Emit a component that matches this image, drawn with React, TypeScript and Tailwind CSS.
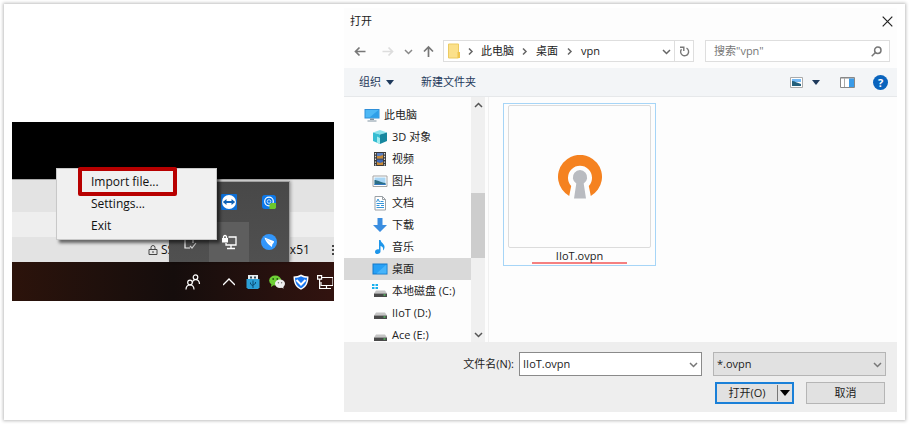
import type { ReactNode } from "react";

const FONT = "font-['Open_Sans','Noto_Sans_CJK_SC',sans-serif]";

function Chevron({ dir, className = "" }: { dir: "right" | "down" | "up"; className?: string }) {
  const d = dir === "right" ? "M3 1.5 6 4.5 3 7.5" : dir === "down" ? "M1 3 4.5 6.5 8 3" : "M1 6 4.5 2.5 8 6";
  return (
    <svg className={`size-[9px] shrink-0 ${className}`} viewBox="0 0 9 9" fill="none" stroke="currentColor" strokeWidth="1.5">
      <path d={d} />
    </svg>
  );
}

/* ---------- desktop with the tray menu ---------- */

function TeamViewerIcon() {
  return (
    <svg className="size-4" viewBox="0 0 16 16">
      <rect width="16" height="16" rx="1" fill="#0d6fd6" />
      <circle cx="8" cy="8" r="7" fill="#fff" />
      <path d="M1.800 8 5.500 5v2h5V5l3.700 3-3.700 3V9h-5v2Z" fill="#0d62b8" />
    </svg>
  );
}

function SearchToolIcon() {
  return (
    <svg className="size-4" viewBox="0 0 16 16">
      <rect x="1" y="1" width="14" height="14" rx="3" fill="#0d78e8" />
      <circle cx="8" cy="7.500" r="4.300" fill="none" stroke="#fff" strokeWidth="1.200" />
      <circle cx="8" cy="7.500" r="1.800" fill="none" stroke="#bfe0ff" strokeWidth="1" />
      <path d="M8.500 10.500 10 9h5v4.500l-1 1.500H8.500Z" fill="#6cc82c" />
    </svg>
  );
}

function DeviceCheckIcon() {
  return (
    <svg className="size-4" viewBox="0 0 16 16" fill="none" stroke="#f2f2f2" strokeWidth="1.200">
      <path d="M9 14H4V1h8v8" />
      <path d="m9 12 2 2 4-5" stroke="#c9c9c9" />
    </svg>
  );
}

function LockedMonitorIcon() {
  return (
    <svg className="size-4" viewBox="0 0 16 16" fill="none" stroke="#fff" strokeWidth="1.300">
      <path d="M7.500 3H15v8H5V9M10 11v3M6 14.500h8" />
      <path d="M2.500 4.500V3a1.500 1.500 0 0 1 3 0v1.500" />
      <rect x="1" y="4" width="6" height="4.500" fill="#fff" stroke="none" />
    </svg>
  );
}

function BirdIcon() {
  return (
    <svg className="size-4" viewBox="0 0 16 16">
      <circle cx="8" cy="8" r="8" fill="#3296fa" />
      <path d="M3.500 3.500 13 7.200c.2 1-.6 2-1.500 2.800l-.7 3-2.500-2C6.500 9.500 4.500 7 3.500 3.500Z" fill="#fff" />
      <path d="m5 5 5 4" stroke="#b9dcff" strokeWidth=".8" />
    </svg>
  );
}

function PeopleIcon() {
  return (
    <svg className="size-4" viewBox="0 0 16 16" fill="none" stroke="#fff" strokeWidth="1.200">
      <circle cx="10.500" cy="3.200" r="2.300" />
      <path d="M7.500 8.500c0-4 6.800-4 7 1.500" />
      <circle cx="5" cy="8.500" r="2.300" />
      <path d="M1 15.500c.2-6 7.800-6 8 0" />
    </svg>
  );
}

function UsbIcon() {
  return (
    <svg className="size-4" viewBox="0 0 16 16">
      <rect x="3" y="1" width="10" height="5" fill="#e7eef2" />
      <path d="M5 2.500h2v2H5zM9 2.500h2v2H9z" fill="#374c58" />
      <path d="M1.500 5h13v8.500L13 15H3l-1.500-1.500Z" fill="#2c9fd6" />
      <path d="M8 14V6.500M8 12 5.500 10V8.500M8 11l2.500-1.500V8" stroke="#0b4c74" fill="none" />
    </svg>
  );
}

function WeChatIcon() {
  return (
    <svg className="size-4" viewBox="0 0 16 16">
      <ellipse cx="6.200" cy="6.500" rx="6" ry="5" fill="#6ecf35" />
      <path d="m2.500 10-.5 3 3-2Z" fill="#6ecf35" />
      <circle cx="4.200" cy="5" r=".9" fill="#245b10" />
      <circle cx="8.300" cy="5" r=".9" fill="#245b10" />
      <ellipse cx="11" cy="9.700" rx="5" ry="4.200" fill="#ededed" />
      <path d="m12 13 2.500 1.700-.3-2.700Z" fill="#ededed" />
      <circle cx="9.400" cy="8.700" r=".7" fill="#777" />
      <circle cx="12.600" cy="8.700" r=".7" fill="#777" />
    </svg>
  );
}

function ShieldIcon() {
  return (
    <svg className="size-4" viewBox="0 0 16 16">
      <path d="M.5 2.500C3 2.500 6 1.800 8 .5c2 1.300 5 2 7.500 2 0 7-2.500 11-7.500 13.300C3 13.500.5 9.500.5 2.500Z" fill="#fff" />
      <path d="M2 3.800c2-.1 4.200-.6 6-1.600 1.800 1 4 1.500 6 1.600-.2 5.500-2.200 8.700-6 10.500C4.200 12.500 2.200 9.300 2 3.800Z" fill="#1877f2" />
      <path d="m3.500 6 4.500 4.500L12.500 6" fill="none" stroke="#fff" strokeWidth="2" />
    </svg>
  );
}

function NetworkIcon() {
  return (
    <svg className="size-4" viewBox="0 0 16 16" fill="none" stroke="#fff" strokeWidth="1.200">
      <path d="M5 3.500h11v8H4V8M9.500 11.500v3M6 14.500h8" />
      <path d="M.6 1.600h4v3.500h-4zM2.600 5v9.500H6" />
    </svg>
  );
}

function TrayCell({ children, active = false }: { children?: ReactNode; active?: boolean }) {
  return <span className={`flex size-10 items-center justify-center ${active ? "bg-[#5e5e5e]" : ""}`}>{children}</span>;
}

function DesktopPanel() {
  return (
    <section className="relative mt-[114px] w-[322px] shrink-0 self-start overflow-hidden text-[12px] text-[#111]">
      <div className="h-[57px] bg-black" />
      <div className="h-[33px] border-t border-[#aaa] bg-[#e3e3e3]" />
      <div className="h-[25px] bg-[#eeeeee]" />
      <div className="flex h-[25px] items-center bg-[#e3e3e3] pl-[136px]">
        <svg className="size-[10px]" viewBox="0 0 10 10" fill="none" stroke="#444">
          <path d="M1 4.500h8v5H1zM3 4V2.500a2 2 0 0 1 4 0V4M5 6v2" />
        </svg>
        <span className="w-[125px] pl-[3px]">SSL</span>
        <span>0x51</span>
        <span className="ml-auto h-[10px] border-l-2 border-dotted border-[#444]" />
      </div>
      <div className="flex h-[39px] items-center justify-end bg-linear-to-r from-[#2c130b] via-[#150d0c] to-[#32130f]">
        <span className="mr-[22px]">
          <PeopleIcon />
        </span>
        <svg className="mr-[10px] h-4 w-3" viewBox="0 0 12 16" fill="none" stroke="#fff" strokeWidth="1.400">
          <path d="m0 11 6-6 6 6" />
        </svg>
        <div className="mr-px flex gap-2">
          <UsbIcon />
          <WeChatIcon />
          <ShieldIcon />
          <NetworkIcon />
        </div>
      </div>

      <div className="absolute top-[59px] left-[157px] grid grid-cols-3 border-t border-r border-[#a0a0a0] bg-linear-to-b from-[#484848] to-[#505050] shadow-[1px_0_3px_rgba(0,0,0,0.3)]">
        <TrayCell />
        <TrayCell>
          <TeamViewerIcon />
        </TrayCell>
        <TrayCell>
          <SearchToolIcon />
        </TrayCell>
        <TrayCell>
          <DeviceCheckIcon />
        </TrayCell>
        <TrayCell active>
          <LockedMonitorIcon />
        </TrayCell>
        <TrayCell>
          <BirdIcon />
        </TrayCell>
      </div>

      <div className="absolute top-[46px] left-[44px] flex w-[161px] flex-col border border-[#c8c8c8] bg-[#f0f0f0] py-[2px] shadow-[3px_3px_3px_rgba(0,0,0,0.55)]">
        <button className="h-[22px] pl-[34px] text-left">Import file...</button>
        <button className="h-[22px] pl-[34px] text-left">Settings...</button>
        <button className="h-[22px] pl-[34px] text-left">Exit</button>
      </div>
      <div className="pointer-events-none absolute top-[45px] left-[66px] h-[29px] w-[99px] rounded-[2px] border-4 border-[#b80000]" />
    </section>
  );
}

/* ---------- icons of the folder tree ---------- */

function PcIcon() {
  return (
    <svg className="h-4 w-4" viewBox="0 0 16 16">
      <path d="M.5 2h15v9.500H.5z" fill="#2f8fd8" />
      <path d="M1.500 3h13v7.500h-13z" fill="#4db8f5" />
      <path d="M14.500 3v7.500h-9Z" fill="#2f9fe8" />
      <path d="M6 11.500h4V13H6zM3.500 13.500h9v1h-9z" fill="#8195a3" />
    </svg>
  );
}
function CubeIcon() {
  return (
    <svg className="h-4 w-4" viewBox="0 0 16 16">
      <path d="m1 3.500 7-2.500 7 2.500-7 2Z" fill="#8be3ec" />
      <path d="M1 3.500 8 5.500V15l-7-3Z" fill="#35bdd2" />
      <path d="m15 3.500-7 2V15l7-3Z" fill="#16879f" />
      <path d="M5 7.500 8 9v6l-3-1.500Z" fill="#a2edf0" />
    </svg>
  );
}
function FilmIcon() {
  return (
    <svg className="h-4 w-4" viewBox="0 0 16 16">
      <path d="M2 1h12v14H2z" fill="#3a3a3a" />
      <path d="M5 2h6v5.500H5z" fill="#5a7fc0" />
      <path d="M5 8.500h6V14H5z" fill="#3f69b8" />
      <path d="M5 5h3l3-1v3.500H5zM5 11l3 1 3-1v3H5z" fill="#c98a35" />
      <path d="M3.500 2v13M12.500 2v13" stroke="#ddd" strokeWidth="1.200" strokeDasharray="1.400 1.400" />
    </svg>
  );
}
function PictureIcon() {
  return (
    <svg className="h-4 w-4" viewBox="0 0 16 16">
      <path d="M1 3h14v10.500H1z" fill="#fff" stroke="#a5a5a5" />
      <path d="M2.500 4.500h11V12h-11z" fill="#a9d6f5" />
      <path d="M2.500 7C6 7 8 9.500 13.500 10v2h-11Z" fill="#2d6f86" />
      <path d="M2.500 11h11v1h-11z" fill="#3279c1" />
    </svg>
  );
}
function DocIcon() {
  return (
    <svg className="h-4 w-4" viewBox="0 0 16 16">
      <path d="M3 1.500h7.500l3 3v10.500H3z" fill="#fff" stroke="#9aa0a5" />
      <path d="M10.500 1.500v3h3" fill="none" stroke="#9aa0a5" />
      <path d="m4.500 7 1.500-3 1.500 3M8.500 6.500h3M4.500 8.500h7.500M4.500 10.500h3M9 10.500h3M4.500 12.500h7.500" stroke="#3594d8" fill="none" />
    </svg>
  );
}
function DownloadIcon() {
  return (
    <svg className="h-4 w-4" viewBox="0 0 16 16">
      <path d="M5.500 1h5v7H15l-7 7-7-7h4.500Z" fill="#3a8de0" />
    </svg>
  );
}
function MusicIcon() {
  return (
    <svg className="h-4 w-4" viewBox="0 0 16 16">
      <path d="M7 1h1.500c.5 3 4.500 4 4 7.500-.2 1.500-1 2.500-1.500 3 .5-3-.5-4-2.500-4.500v5.500c0 3-5.500 3.500-5.500.5 0-2 2-3 4-2.500Z" fill="#1e96ea" />
    </svg>
  );
}
function DesktopIcon() {
  return (
    <svg className="h-4 w-4" viewBox="0 0 16 16">
      <path d="M.5 2.500h15v11H.5z" fill="#1479c9" />
      <path d="M1.500 3.500h13v9h-13z" fill="#27a0f5" />
      <path d="M14.500 3.500v9h-10Z" fill="#47b4fa" />
    </svg>
  );
}
function DriveIcon({ system = false }: { system?: boolean }) {
  return (
    <svg className="h-4 w-4" viewBox="0 0 16 16">
      {system && <path d="M0 1h2.500v2H0zM3.500 1H6v2H3.500zM0 4h2.500v2H0zM3.500 4H6v2H3.500z" fill="#19b0ee" />}
      <path d="M4 7.500h9l2 3H2Z" fill="#c4c4c4" />
      <path d="M2 10.500h13v3.500H2z" fill="#4a4a4a" />
      <path d="M11.500 12h2" stroke="#56d364" strokeWidth="1.200" />
    </svg>
  );
}

const TREE: { label: string; icon: ReactNode; root?: boolean; selected?: boolean }[] = [
  { label: "此电脑", icon: <PcIcon />, root: true },
  { label: "3D 对象", icon: <CubeIcon /> },
  { label: "视频", icon: <FilmIcon /> },
  { label: "图片", icon: <PictureIcon /> },
  { label: "文档", icon: <DocIcon /> },
  { label: "下载", icon: <DownloadIcon /> },
  { label: "音乐", icon: <MusicIcon /> },
  { label: "桌面", icon: <DesktopIcon />, selected: true },
  { label: "本地磁盘 (C:)", icon: <DriveIcon system /> },
  { label: "IIoT (D:)", icon: <DriveIcon /> },
  { label: "Ace (E:)", icon: <DriveIcon /> },
];

function Arrow({ dir }: { dir: "left" | "right" | "up" }) {
  const d =
    dir === "left" ? "M11.500 6.500H1.500M5.500 2.500l-4 4 4 4" : dir === "right" ? "M1.500 6.500h10M7.500 2.500l4 4-4 4" : "M6.500 12V2M2 6.500 6.500 2 11 6.500";
  return (
    <svg className="size-[13px]" viewBox="0 0 13 13" fill="none" stroke="currentColor" strokeWidth="1.700">
      <path d={d} />
    </svg>
  );
}

function Caret() {
  return (
    <svg className="h-[5px] w-2 text-[#1e395b]" viewBox="0 0 8 5">
      <path d="M0 0h8L4 5Z" fill="currentColor" />
    </svg>
  );
}

function AddressRow() {
  return (
    <div className="flex h-[22px] items-center pr-[7px] pl-[10px]">
      <button aria-label="后退" className="text-[#777]">
        <Arrow dir="left" />
      </button>
      <button aria-label="前进" className="ml-[14px] text-[#ddd]">
        <Arrow dir="right" />
      </button>
      <button aria-label="最近浏览的位置" className="ml-[10px] text-[#888]">
        <Chevron dir="down" />
      </button>
      <button aria-label="向上" className="ml-[9px] text-[#777]">
        <Arrow dir="up" />
      </button>
      <nav className="ml-2 flex h-[22px] min-w-0 flex-1 items-center border border-[#dedede] bg-white pl-1">
        <svg className="mr-[6px] h-4 w-3 shrink-0" viewBox="0 0 12 16">
          <path d="M.5 1h10v14H.5z" fill="#fbe08a" stroke="#eccb62" />
          <path d="M9.500 9H12v6H9.500z" fill="#efc54e" />
        </svg>
        <Chevron dir="right" className="text-[#666]" />
        <button className="mx-[6px]">此电脑</button>
        <Chevron dir="right" className="text-[#666]" />
        <button className="mx-[7px]">桌面</button>
        <Chevron dir="right" className="text-[#666]" />
        <button className="mx-[7px]">vpn</button>
        <button aria-label="以前的位置" className="mr-[3px] ml-auto text-[#666]">
          <Chevron dir="down" />
        </button>
        <button aria-label="刷新" className="flex h-full w-[19px] items-center justify-center border-l border-[#dedede]">
          <svg className="size-[11px]" viewBox="0 0 11 11" fill="none" stroke="#777" strokeWidth="1.400">
            <path d="M7.500 2.200A4 4 0 1 1 2.500 3.200" />
            <path d="M1 1.200h3.800V5" />
          </svg>
        </button>
      </nav>
      <label className="ml-[11px] flex h-[22px] w-[185px] shrink-0 items-center border border-[#dedede] bg-white pr-[7px] pl-2">
        <input aria-label="搜索" placeholder='搜索"vpn"' className="min-w-0 flex-1 outline-none placeholder:text-[#777]" />
        <svg className="size-[11px]" viewBox="0 0 11 11" fill="none" stroke="#777" strokeWidth="1.500">
          <circle cx="6.800" cy="4.200" r="3.200" />
          <path d="M4.500 6.500.7 10.300" />
        </svg>
      </label>
    </div>
  );
}

function Toolbar() {
  return (
    <div className="mt-[6px] flex h-[29px] items-center border-b border-[#e6e8ea] bg-[#f3f5f7] pr-[9px] pl-[15px] text-[#1e395b]">
      <button className="flex items-center gap-[5px]">
        组织
        <Caret />
      </button>
      <button className="ml-[27px]">新建文件夹</button>
      <button aria-label="视图" className="ml-auto flex items-center gap-[9px]">
        <svg className="h-[11px] w-[13px]" viewBox="0 0 13 11">
          <path d="M.5.500h12v10H.5z" fill="#fff" stroke="#aaa" />
          <path d="M2 2h9v3H2z" fill="#75b9f3" />
          <path d="M2 4c3 0 5 2 9 3v2H2z" fill="#24607b" />
        </svg>
        <Caret />
      </button>
      <button aria-label="预览窗格" className="ml-5">
        <svg className="h-[11px] w-[15px]" viewBox="0 0 15 11">
          <path d="M.5.500h14v10H.5z" fill="#fff" stroke="#888" />
          <path d="M1 1h13" stroke="#888" />
          <path d="M4.500 1v9" stroke="#aaa" />
          <path d="M9 1.500h5V10H9z" fill="#3a9be8" />
        </svg>
      </button>
      <button aria-label="帮助" className="ml-[18px] flex size-[15px] items-center justify-center rounded-full bg-[#0a64bd] text-[11px] leading-none font-bold text-white">
        ?
      </button>
    </div>
  );
}

function Scrollbar() {
  return (
    <div className="flex w-[14px] shrink-0 flex-col items-center bg-[#f0f0f0] text-[#555]">
      <button aria-label="向上滚动" className="flex h-[17px] items-center">
        <Chevron dir="up" />
      </button>
      <div className="mt-[79px] h-[65px] w-full bg-[#cdcdcd]" />
      <button aria-label="向下滚动" className="mt-auto flex h-[15px] items-center">
        <Chevron dir="down" />
      </button>
    </div>
  );
}

function FileTile() {
  return (
    <button className="mt-[6px] ml-[14px] flex h-[163px] w-[153px] flex-col items-center self-start border border-[#a6d5f7] pt-px">
      <span className="flex h-[143px] w-[143px] items-center justify-center rounded-[2px] border border-[#dcdcdc]">
        <svg className="size-11" viewBox="0 0 44 44">
          <path d="M11.200 41A22 22 0 1 1 32.800 41L30.800 31A12 12 0 1 0 13.200 31Z" fill="#f58220" />
          <path d="M18.300 28.500a7.200 7.200 0 1 1 7.400 0L28 43.500H16Z" fill="#b9bbc0" />
        </svg>
      </span>
      <span className="mt-[2px] border-b-2 border-[#f58080] px-6 text-[11px] leading-3">IIoT.ovpn</span>
    </button>
  );
}

function OpenDialog() {
  return (
    <section className="flex min-w-0 flex-1 flex-col bg-[#fdfdfd] text-[11px] text-[#222]">
      <header className="flex h-[32px] items-center justify-between pr-1 pb-[5px] pl-[6px]">
        <h1>打开</h1>
        <button aria-label="关闭">
          <svg className="size-[11px]" viewBox="0 0 11 11" stroke="#222" strokeWidth="1.200">
            <path d="m.7.7 9.600 9.600M10.300.7.7 10.300" />
          </svg>
        </button>
      </header>
      <AddressRow />
      <Toolbar />
      <div className="flex h-[245px]">
        <ul className="w-[127px] shrink-0 overflow-hidden pt-[7px]">
          {TREE.map((n) => (
            <li key={n.label} className={`flex h-[22px] items-center gap-1 whitespace-nowrap ${n.root ? "pl-5" : "pl-7"} ${n.selected ? "bg-[#d9d9d9]" : ""}`}>
              {n.icon}
              {n.label}
            </li>
          ))}
        </ul>
        <Scrollbar />
        <div className="ml-[3px] flex flex-1 border-l border-[#f0f0f0]">
          <FileTile />
        </div>
      </div>
      <footer className="flex h-[70px] flex-col gap-[6px] bg-[#eeeeee] pt-[10px] pr-[11px]">
        <div className="flex items-center">
          <label htmlFor="filename" className="w-[175px] shrink-0 pr-[5px] text-right">
            文件名(N):
          </label>
          <div className="flex h-6 min-w-0 flex-1 items-center border border-[#8a8a8a] bg-white px-[3px]">
            <input id="filename" defaultValue="IIoT.ovpn" className="min-w-0 flex-1 outline-none" />
            <Chevron dir="down" className="text-[#777]" />
          </div>
          <div className="relative ml-[11px] w-[173px] shrink-0">
            <select aria-label="文件类型" className="h-6 w-full appearance-none border border-[#b5b5b5] bg-[#e1e1e1] pl-[3px]">
              <option>*.ovpn</option>
            </select>
            <Chevron dir="down" className="pointer-events-none absolute top-2 right-1 text-[#777]" />
          </div>
        </div>
        <div className="flex h-[22px] justify-end gap-3 pr-px">
          <div className="flex w-[79px] border-2 border-[#1a80d8] bg-[#e1e1e1]">
            <button className="flex-1">打开(O)</button>
            <button aria-label="更多打开方式" className="my-px flex items-center border-l border-[#777] px-[2px]">
              <svg className="h-[6px] w-[10px]" viewBox="0 0 10 6">
                <path d="M0 0h10L5 6Z" fill="#000" />
              </svg>
            </button>
          </div>
          <button className="w-[79px] border border-[#b5b5b5] bg-[#e1e1e1]">取消</button>
        </div>
      </footer>
    </section>
  );
}

export default function App() {
  return (
    <div className={`bg-white p-1 ${FONT}`}>
      <main className="mr-px flex gap-[10px] bg-white px-2 pt-1 pb-2 shadow-[0_0_3px_1px_rgba(0,0,0,0.25)]">
        <DesktopPanel />
        <OpenDialog />
      </main>
    </div>
  );
}
